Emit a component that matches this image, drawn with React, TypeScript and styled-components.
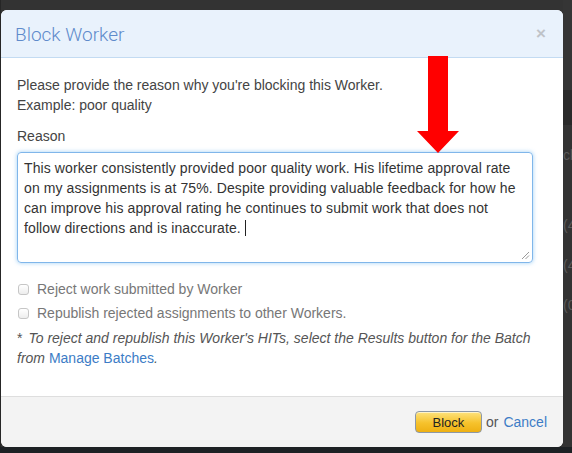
import React from "react";
import styled, { createGlobalStyle } from "styled-components";

const Global = createGlobalStyle`
  html, body { margin: 0; padding: 0; background: #333; }
  body { font-family: "Liberation Sans", Arial, sans-serif; }
`;

const Page = styled.div`
  position: relative;
  width: 572px;
  height: 453px;
  overflow: hidden;
  background: #333;
  display: flex;
  flex-direction: column;
`;

const Stage = styled.div`
  display: flex;
  align-items: flex-start;
  height: 447px;
`;

const LeftEdge = styled.div`
  width: 1px;
  align-self: stretch;
  background: #262626;
`;

const BottomBar = styled.div`
  height: 6px;
  background: #1d2124;
`;

const Modal = styled.div`
  margin-top: 10px;
  width: 562px;
  height: 437px;
  background: #fff;
  border-radius: 6px;
  overflow: hidden;
  display: flex;
  flex-direction: column;
`;

const Header = styled.div`
  height: 47px;
  flex: none;
  background: #e9f2fc;
  border-bottom: 1px solid #c3dbf2;
  display: flex;
  align-items: center;
  justify-content: space-between;
  padding: 0 17px 0 14px;
`;

const Title = styled.h3`
  margin: 0;
  font-family: "Roboto Light", Roboto, "Liberation Sans", sans-serif;
  font-weight: 300;
  font-size: 19px;
  color: #5f8bcb;
  padding-top: 2px;
`;

const Close = styled.span`
  font-family: "Liberation Sans", Arial, sans-serif;
  font-weight: bold;
  font-size: 17px;
  color: #bfc3c8;
  line-height: 1;
`;

const Body = styled.div`
  flex: 1;
  padding: 17px 16px 0 16px;
  font-size: 14px;
  color: #444;
  line-height: 20px;
`;

const Para = styled.p`
  margin: 0;
`;

const Label = styled.div`
  margin-top: 11px;
  color: #444;
`;

const TextBox = styled.div`
  margin-top: 6px;
  width: 516px;
  height: 111px;
  box-sizing: border-box;
  border: 1px solid #80b6ea;
  border-radius: 4px;
  box-shadow: 0 0 4px rgba(82, 168, 236, 0.55);
  padding: 5px 6px;
  font-size: 14px;
  letter-spacing: 0.1px;
  line-height: 20px;
  color: #333;
  position: relative;
`;

const Caret = styled.span`
  display: inline-block;
  width: 1px;
  height: 16px;
  background: #222;
  vertical-align: -3px;
`;

const Grip = styled.svg`
  position: absolute;
  right: 2px;
  bottom: 2px;
`;

const Checks = styled.div`
  margin-top: 16px;
  display: flex;
  flex-direction: column;
  gap: 4px;
`;

const CheckRow = styled.label`
  display: flex;
  align-items: center;
  gap: 8px;
  color: #777;
  padding-left: 1px;
`;

const Box = styled.span`
  width: 11px;
  height: 11px;
  border: 1px solid #c6c6c6;
  border-radius: 3px;
  background: linear-gradient(#fff, #ededed);
  box-sizing: border-box;
`;

const Note = styled.p`
  margin: 5px 0 0;
  font-style: italic;
  color: #555;
`;

const Star = styled.span`
  font-style: normal;
  margin-right: 6px;
`;

const Link = styled.a`
  color: #3c7cc6;
  text-decoration: none;
  font-style: normal;
`;

const Footer = styled.div`
  flex: none;
  height: 50px;
  background: #f3f3f3;
  border-top: 1px solid #dedede;
  display: flex;
  align-items: center;
  justify-content: flex-end;
  padding: 0 16px 0 0;
  gap: 5px;
  font-size: 14px;
  color: #555;
`;

const BlockButton = styled.button`
  width: 67px;
  height: 22px;
  border: 1px solid #8d98a6;
  border-radius: 4px;
  background: linear-gradient(#fde27d, #f6c22c 55%, #eeb013);
  box-shadow: inset 0 1px 0 rgba(255, 255, 255, 0.6);
  font-family: "Liberation Sans", Arial, sans-serif;
  font-size: 13px;
  color: #222;
  padding: 0;
  margin-right: -1px;
`;

const Behind = styled.div`
  flex: 1;
  align-self: stretch;
  display: flex;
  flex-direction: column;
  overflow: hidden;
`;

const Band = styled.div<{ $h: number; $bg: string }>`
  height: ${(p) => p.$h}px;
  background: ${(p) => p.$bg};
  flex: none;
`;

const BehindText = styled.div`
  flex: 1;
  background: #333;
  color: #5a5a5a;
  font-size: 14px;
  line-height: 20px;
  white-space: nowrap;
  padding-top: 20px;
`;

const BehindLine = styled.div<{ $mt: number }>`
  margin-top: ${(p) => p.$mt}px;
`;

const Arrow = styled.svg`
  position: absolute;
  left: 417px;
  top: 56px;
`;

export default function App() {
  return (
    <Page>
      <Global />
      <Stage>
        <LeftEdge />
        <Modal>
          <Header>
            <Title>Block Worker</Title>
            <Close>×</Close>
          </Header>
          <Body>
            <Para>Please provide the reason why you're blocking this Worker.</Para>
            <Para>Example: poor quality</Para>
            <Label>Reason</Label>
            <TextBox>
              This worker consistently provided poor quality work. His lifetime approval rate on my
              assignments is at 75%. Despite providing valuable feedback for how he can improve his
              approval rating he continues to submit work that does not follow directions and is
              inaccurate.&nbsp;<Caret />
              <Grip width="9" height="9" viewBox="0 0 9 9">
                <path d="M1 8 L8 1 M4.5 8 L8 4.5" stroke="#9a9a9a" strokeWidth="1" />
              </Grip>
            </TextBox>
            <Checks>
              <CheckRow>
                <Box />
                Reject work submitted by Worker
              </CheckRow>
              <CheckRow>
                <Box />
                Republish rejected assignments to other Workers.
              </CheckRow>
            </Checks>
            <Note>
              <Star>*</Star>To reject and republish this Worker's HITs, select the Results button for the
              Batch from <Link href="#">Manage Batches</Link>.
            </Note>
          </Body>
          <Footer>
            <BlockButton>Block</BlockButton>
            <span>or</span>
            <Link href="#">Cancel</Link>
          </Footer>
        </Modal>
        <Behind>
          <Band $h={90} $bg="#353535" />
          <Band $h={35} $bg="#2a2a2a" />
          <BehindText>
            <BehindLine $mt={0}>ck</BehindLine>
            <BehindLine $mt={50}>(4</BehindLine>
            <BehindLine $mt={20}>(4</BehindLine>
            <BehindLine $mt={20}>(0</BehindLine>
          </BehindText>
        </Behind>
      </Stage>
      <BottomBar />
      <Arrow width="42" height="97" viewBox="0 0 42 97">
        <polygon points="11,0 31,0 31,75 42,75 21,97 0,75 11,75" fill="#ff0000" />
      </Arrow>
    </Page>
  );
}
